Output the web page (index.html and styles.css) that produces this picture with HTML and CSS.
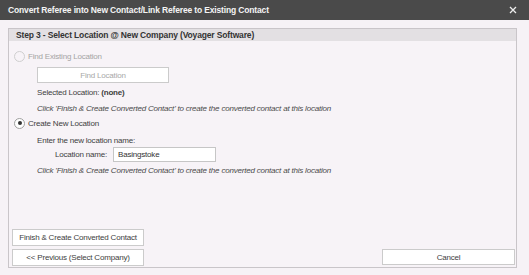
FILE: index.html
```html
<!DOCTYPE html>
<html>
<head>
<meta charset="utf-8">
<link rel="stylesheet" href="styles.css">
</head>
<body>
<div class="window">
  <div class="titlebar">
    <span class="title">Convert Referee into New Contact/Link Referee to Existing Contact</span>
    <svg class="close" width="8" height="8" viewBox="0 0 8 8"><path d="M1 1L7 7M7 1L1 7" stroke="#ededed" stroke-width="1.3"/></svg>
  </div>
  <div class="content">
    <div class="panel">
      <div class="panel-head">Step 3 - Select Location @ New Company (Voyager Software)</div>
      <div class="panel-body">
        <div class="radio-row disabled"><span class="radio"></span><span>Find Existing Location</span></div>
        <div class="indent btn-row"><div class="btn btn-find">Find Location</div></div>
        <div class="indent line sel">Selected Location:&nbsp; <b>(none)</b></div>
        <div class="indent line italic">Click 'Finish &amp; Create Converted Contact' to create the converted contact at this location</div>
        <div class="radio-row r2"><span class="radio checked"></span><span>Create New Location</span></div>
        <div class="indent line enter">Enter the new location name:</div>
        <div class="field-row"><span class="field-label">Location name:</span><span class="input">Basingstoke</span></div>
        <div class="indent line italic it2">Click 'Finish &amp; Create Converted Contact' to create the converted contact at this location</div>
      </div>
      <div class="panel-foot">
        <div class="btn btn-wide">Finish &amp; Create Converted Contact</div>
        <div class="foot-row">
          <div class="btn btn-wide">&lt;&lt; Previous (Select Company)</div>
          <div class="btn btn-cancel">Cancel</div>
        </div>
      </div>
    </div>
  </div>
</div>
</body>
</html>
```
FILE: styles.css
```css
* { box-sizing: border-box; }
html, body { margin: 0; padding: 0; }
body {
  width: 529px;
  height: 275px;
  overflow: hidden;
  background: #f6f2f6;
  font-family: "Liberation Sans", Arial, sans-serif;
  font-size: 8px;
  letter-spacing: -0.2px;
  color: #3e3e3e;
}
.window {
  width: 529px;
  height: 275px;
  display: flex;
  flex-direction: column;
}
.titlebar {
  height: 20px;
  flex: 0 0 20px;
  background: #4a4a4a;
  display: flex;
  align-items: center;
  justify-content: space-between;
  padding: 0 12px 0 8px;
}
.title {
  color: #f4f4f4;
  font-weight: bold;
  font-size: 8.5px;
  letter-spacing: -0.15px;
}
.close { display: block; }
.content {
  flex: 1;
  padding: 8px 12px 7px 8px;
  display: flex;
}
.panel {
  flex: 1;
  border: 1px solid #c9c5c9;
  display: flex;
  flex-direction: column;
  background: #f7f3f7;
}
.panel-head {
  height: 12px;
  background: #e3e0e3;
  font-weight: bold;
  font-size: 8.5px;
  letter-spacing: -0.15px;
  color: #333;
  padding-left: 7px;
  display: flex;
  align-items: center;
}
.panel-body {
  flex: 1;
  display: flex;
  flex-direction: column;
  padding-left: 5px;
}
.radio-row {
  height: 14px;
  display: flex;
  align-items: center;
  gap: 3px;
  margin-top: 8px;
}
.radio-row.disabled { color: #a4a4a4; }
.radio-row.r2 { margin-top: 2px; }
.radio {
  width: 11px;
  height: 11px;
  border-radius: 50%;
  border: 1px solid #a0a0a0;
  background: #fff;
  display: flex;
  align-items: center;
  justify-content: center;
}
.disabled .radio { border-color: #cfcfcf; background: #f7f3f7; }
.radio.checked::after {
  content: "";
  width: 4px;
  height: 4px;
  border-radius: 50%;
  background: #333;
}
.indent { padding-left: 23px; }
.line {
  height: 12px;
  display: flex;
  align-items: center;
  white-space: nowrap;
}
.btn-row { margin-top: 4px; }
.btn {
  height: 16px;
  background: #fff;
  border: 1px solid #cbcbcb;
  display: flex;
  align-items: center;
  justify-content: center;
  color: #3e3e3e;
}
.btn-find { width: 132px; color: #a8a8a8; }
.sel { margin-top: 3px; }
.italic { font-style: italic; margin-top: 4px; color: #4a4a4a; }
.enter { margin-top: 4px; }
.field-row {
  margin-top: 1px;
  height: 15px;
  display: flex;
  align-items: center;
  padding-left: 41px;
}
.field-label { width: 58px; }
.input {
  width: 103px;
  height: 15px;
  background: #fff;
  border: 1px solid #c6c6c6;
  display: flex;
  align-items: center;
  padding-left: 4px;
  color: #333;
}
.it2 { margin-top: 2px; }
.panel-foot {
  display: flex;
  flex-direction: column;
  gap: 3px;
  padding: 0 1px 1px 3px;
}
.foot-row {
  display: flex;
  justify-content: space-between;
}
.btn-wide { width: 132px; height: 17px; }
.btn-cancel { width: 133px; height: 16px; }
```
